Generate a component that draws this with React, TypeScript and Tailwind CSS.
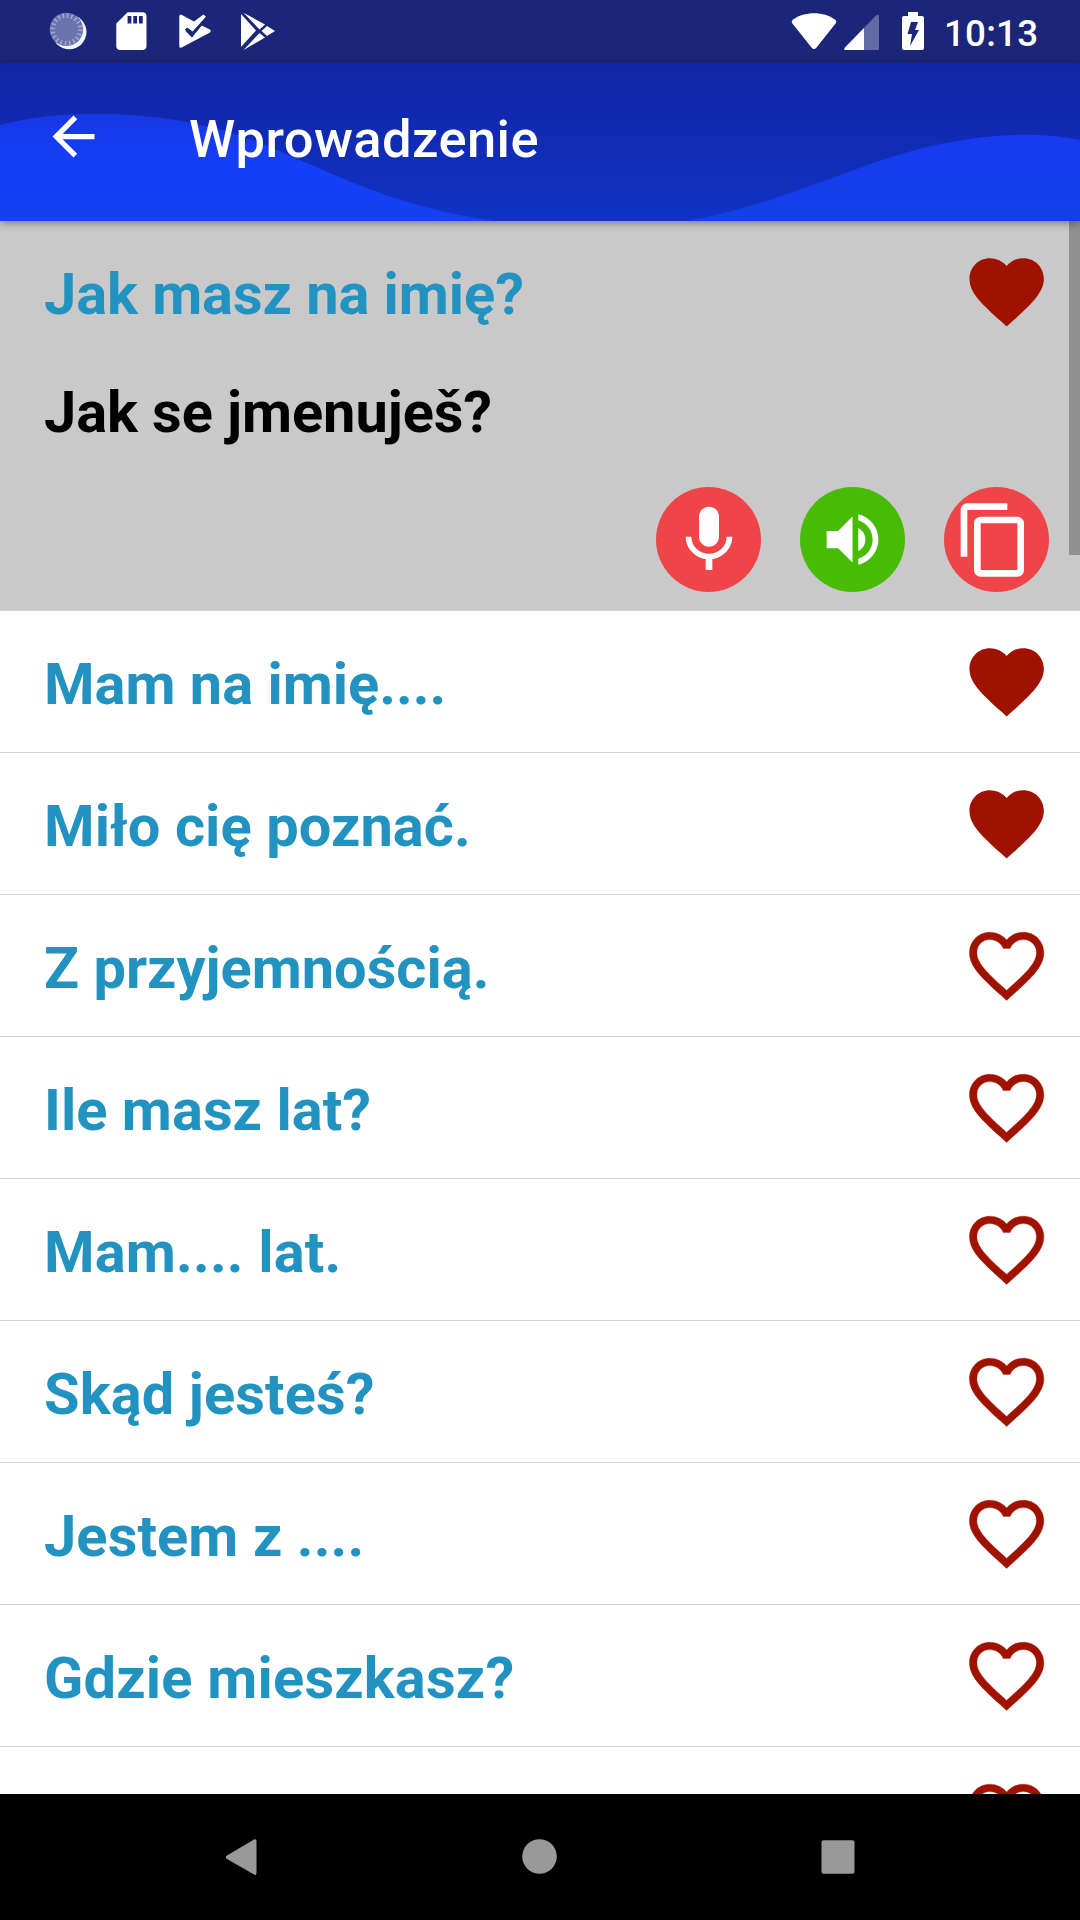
import React from "react";

const phrases = [
  { text: "Mam na imię....", fav: true, tracking: "tracking-normal" },
  { text: "Miło cię poznać.", fav: true, tracking: "tracking-[0.08px]" },
  { text: "Z przyjemnością.", fav: false, tracking: "tracking-normal" },
  { text: "Ile masz lat?", fav: false, tracking: "tracking-[0.04px]" },
  { text: "Mam.... lat.", fav: false, tracking: "tracking-[0.18px]" },
  { text: "Skąd jesteś?", fav: false, tracking: "tracking-[0.12px]" },
  { text: "Jestem z ....", fav: false, tracking: "tracking-[0.1px]" },
  { text: "Gdzie mieszkasz?", fav: false, tracking: "tracking-[0.2px]" },
  { text: "", fav: false, tracking: "tracking-normal" },
];

const SOLID =
  "M12 21.35l-1.45-1.32C5.4 15.36 2 12.28 2 8.5 2 5.42 4.42 3 7.5 3c1.74 0 3.41.81 4.5 2.09C13.09 3.81 14.76 3 16.5 3 19.58 3 22 5.42 22 8.5c0 3.78-3.4 6.86-8.55 11.54L12 21.35z";
const OUTLINE =
  "M16.5 3c-1.74 0-3.41.81-4.5 2.09C10.91 3.81 9.24 3 7.5 3 4.42 3 2 5.42 2 8.5c0 3.78 3.4 6.86 8.55 11.54L12 21.35l1.45-1.32C18.6 15.36 22 12.28 22 8.5 22 5.42 19.58 3 16.5 3zm-4.4 15.55l-.1.1-.1-.1C7.14 14.24 4 11.39 4 8.5 4 6.5 5.5 5 7.5 5c1.54 0 3.04.99 3.57 2.36h1.87C13.46 5.99 14.96 5 16.5 5c2 0 3.5 1.5 3.5 3.5 0 2.89-3.14 5.74-7.9 10.05z";

function Heart({ filled }: { filled: boolean }) {
  return (
    <svg
      viewBox="0 0 24 24"
      className="mt-[25.5px] size-[89.3px] shrink-0 fill-[#a01200] stroke-[#a01200]"
      strokeWidth={filled ? 0 : 0.1}
    >
      <path d={filled ? SOLID : OUTLINE} />
    </svg>
  );
}

function Row({ text, fav, tracking }: { text: string; fav: boolean; tracking: string }) {
  return (
    <div className="flex h-[141px] shrink-0 items-start justify-between pr-[28.7px] pl-[44px]">
      <span className={`mt-[39px] text-[57.75px] leading-[68px] font-bold text-[#2293c0] ${tracking}`}>{text}</span>
      <Heart filled={fav} />
    </div>
  );
}

function StatusBar() {
  return (
    <div className="flex h-[63px] shrink-0 items-start justify-between bg-[#1b2678]">
      <svg viewBox="0 0 300 63" className="h-[63px] w-[300px]">
        <circle cx="69.2" cy="32" r="17.3" fill="#f4f5fa" />
        <circle cx="66.4" cy="29.4" r="16.7" fill="#6c74ad" />
        <circle cx="66.4" cy="29.4" r="13.8" fill="none" stroke="#a3a8cd" strokeWidth="4.400" strokeDasharray="1.600 2.735" />
        <g transform="translate(108.700 8.500) scale(1.890)" fill="#fff">
          <path d="M18 2h-8L4.020 8 4 20c0 1.100.9 2 2 2h12c1.100 0 2-.9 2-2V4c0-1.100-.9-2-2-2zm-6 6h-2V4h2v4zm3 0h-2V4h2v4zm3 0h-2V4h2v4z" />
        </g>
        <path d="M181 14.500Q179.300 14.500 179.300 16.500V46Q179.300 48.500 181.700 47.500L210 32.500Q211.800 31 210 29.500L201.500 25.500L192 37.500L185.500 31L188 28L191.500 30.500L205.800 16.500L203.500 14.500L194 21.500z" fill="#fff" />
        <path d="M186 28.500L192 34.500L204.500 20" fill="none" stroke="#1b2678" strokeWidth="3" />
        <path d="M188.500 26L192.500 29.500L204.500 16" fill="none" stroke="#fff" strokeWidth="3" />
        <path d="M241 14L256 30.500L241 47zM243.500 12.800L265 24.500L259.500 29.500zM267 26L275 31L267 36L261.500 31zM243.500 50L259.500 33L265 37.500z" fill="#fff" />
      </svg>
      <div className="flex">
        <svg viewBox="780 0 160 63" className="h-[63px] w-[160px]">
          <path d="M814 49Q812.800 49 811.500 47.500L792 23Q791 21 793 19.500C804 11 824 11 835 19.500Q837 21 836 23L816.500 47.500Q815.200 49 814 49z" fill="#fff" />
          <path d="M879 16.500V48.500Q879 50 877.500 50H846Q843 50 845 47.500L876 15.500Q879 13.500 879 16.500z" fill="#646ba3" />
          <path d="M864 28V50H846Q843 50 845 47.500z" fill="#fff" />
          <path d="M908 12h10v4h4q2 0 2 2v30q0 2-2 2h-18q-2 0-2-2v-30q0-2 2-2h4z" fill="#fff" />
          <path d="M911 22h7l-3 8h4l-9 16 2-12h-4.500z" fill="#1b2678" />
        </svg>
        <span className="mt-[12px] mr-[41.500px] w-[98.500px] pl-[4px] text-[36.750px] leading-[43px] font-medium tracking-[0.2px] text-white">
          10:13
        </span>
      </div>
    </div>
  );
}

function AppBar() {
  return (
    <div className="relative z-10 flex h-[158px] shrink-0 items-start bg-linear-to-b from-[#1024a5] to-[#1033c4] shadow-[0_2px_8px_rgba(0,0,0,0.4)]">
      <svg viewBox="0 63 1080 158" className="absolute inset-0 h-full w-full">
        <defs>
          <linearGradient id="wave" x1="0" y1="114" x2="0" y2="221" gradientUnits="userSpaceOnUse">
            <stop offset="0" stopColor="#1638e4" />
            <stop offset="0.5" stopColor="#153ffa" />
            <stop offset="1" stopColor="#1241ee" />
          </linearGradient>
          <linearGradient id="wave2" x1="0" y1="135" x2="0" y2="221" gradientUnits="userSpaceOnUse">
            <stop offset="0" stopColor="#163af0" />
            <stop offset="1" stopColor="#123fe6" />
          </linearGradient>
        </defs>
        <path d="M0 125C30 117 60 114 95 114C190 114 245 136 286 154C340 177 400 208 495 221H0z" fill="url(#wave)" />
        <path d="M685 221C780 206 860 161 936 145C990 133 1040 132 1080 140V221z" fill="url(#wave2)" />
      </svg>
      <svg viewBox="0 0 24 24" className="relative mt-[42px] ml-[42px] size-[63px] fill-white">
        <path d="M20 11H7.830l5.590-5.590L12 4l-8 8 8 8 1.410-1.410L7.830 13H20v-2z" />
      </svg>
      <h1 className="relative mt-[45px] ml-[84px] text-[52.500px] leading-[62px] font-medium tracking-[0.4px] text-white">
        Wprowadzenie
      </h1>
    </div>
  );
}

function ActionButton({ color, children }: { color: string; children: React.ReactNode }) {
  return <button className={`flex size-[105px] items-center justify-center rounded-full ${color}`}>{children}</button>;
}

export default function App() {
  return (
    <div className="flex h-[1920px] w-[1080px] flex-col overflow-hidden bg-white font-[Roboto,sans-serif]">
      <StatusBar />
      <AppBar />
      <main className="relative flex h-[1573px] shrink-0 flex-col overflow-hidden">
        <section className="flex h-[389px] shrink-0 flex-col bg-[#c9c9c9]">
          <Row text="Jak masz na imię?" fav tracking="tracking-[-0.06px]" />
          <p className="mt-[16px] pl-[44px] text-[57.750px] leading-[68px] font-bold tracking-[-0.07px] text-black">
            Jak se jmenuješ?
          </p>
          <div className="mt-[41px] flex justify-end gap-[39px] pr-[31px]">
            <ActionButton color="bg-[#ef4549]">
              <svg viewBox="0 0 24 24" className="size-[80px] fill-white">
                <path d="M12 14c1.660 0 2.990-1.340 2.990-3L15 5c0-1.660-1.340-3-3-3S9 3.340 9 5v6c0 1.660 1.340 3 3 3zm5.300-3c0 3-2.540 5.100-5.300 5.100S6.700 14 6.700 11H5c0 3.410 2.720 6.230 6 6.720V21h2v-3.280c3.280-.48 6-3.300 6-6.720h-1.700z" />
              </svg>
            </ActionButton>
            <ActionButton color="bg-[#48bb04]">
              <svg viewBox="0 0 24 24" className="size-[69px] fill-white">
                <path d="M3 9v6h4l5 5V4L7 9H3zm13.500 3c0-1.770-1.020-3.290-2.500-4.030v8.050c1.480-.73 2.500-2.250 2.500-4.020zM14 3.230v2.060c2.890.86 5 3.540 5 6.710s-2.110 5.850-5 6.710v2.060c4.010-.91 7-4.490 7-8.770s-2.990-7.860-7-8.770z" />
              </svg>
            </ActionButton>
            <ActionButton color="bg-[#ef4549]">
              <svg viewBox="0 0 24 24" className="mr-[5px] size-[80px] fill-white">
                <path d="M16 1H4c-1.100 0-2 .9-2 2v14h2V3h12V1zm3 4H8c-1.100 0-2 .9-2 2v14c0 1.100.9 2 2 2h11c1.100 0 2-.9 2-2V7c0-1.100-.9-2-2-2zm0 16H8V7h11v14z" />
              </svg>
            </ActionButton>
          </div>
        </section>
        {phrases.map((p, i) => (
          <div key={i} className="shrink-0 border-t border-[#d3d3d3]">
            <Row text={p.text} fav={p.fav} tracking={p.tracking} />
          </div>
        ))}
        <div className="absolute top-0 right-0 h-[334px] w-[11px] bg-[#909090]" />
      </main>
      <nav className="flex h-[126px] shrink-0 bg-black">
        <svg viewBox="0 1794 1080 126" className="h-[126px] w-[1080px] fill-[#999]">
          <path d="M254 1839.500Q256.500 1838.500 256.500 1841V1873Q256.500 1876 254 1874.500L227 1859Q224.500 1857 227 1855.500z" />
          <circle cx="539.500" cy="1856.500" r="17.300" />
          <rect x="821.500" y="1840.300" width="33" height="33.400" rx="2" />
        </svg>
      </nav>
    </div>
  );
}
